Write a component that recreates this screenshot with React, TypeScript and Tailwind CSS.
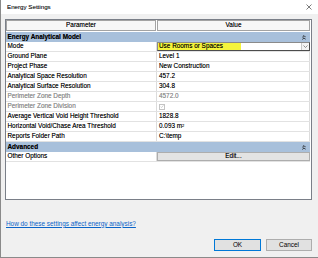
import type { ReactNode } from "react";

interface Row {
  label: string;
  value: ReactNode;
  disabled?: boolean;
}

const rows: Row[] = [
  { label: "Ground Plane", value: "Level 1" },
  { label: "Project Phase", value: "New Construction" },
  { label: "Analytical Space Resolution", value: "457.2" },
  { label: "Analytical Surface Resolution", value: "304.8" },
  { label: "Perimeter Zone Depth", value: "4572.0", disabled: true },
  {
    label: "Perimeter Zone Division",
    disabled: true,
    value: (
      <span className="w-[6px] h-[6px] border border-[#c4c4c4] bg-white flex items-center justify-center">
        <svg width="5" height="5" viewBox="0 0 5 5">
          <path d="M0.8 2.6 L2 3.8 L4.3 1" fill="none" stroke="#b8b8b8" strokeWidth="0.8" />
        </svg>
      </span>
    ),
  },
  { label: "Average Vertical Void Height Threshold", value: "1828.8" },
  {
    label: "Horizontal Void/Chase Area Threshold",
    value: (
      <span>
        0.093 m<sup className="text-[4px] relative -top-[1px]">2</sup>
      </span>
    ),
  },
  { label: "Reports Folder Path", value: "C:\\temp" },
];

const CollapseIcon = () => (
  <svg width="4" height="5" viewBox="0 0 4 5">
    <path d="M0.4 2.2 L2 0.6 L3.6 2.2 M0.4 4.4 L2 2.8 L3.6 4.4" fill="none" stroke="#1a1a1a" strokeWidth="0.9" />
  </svg>
);

const Section = ({ title }: { title: string }) => (
  <div className="h-[10px] bg-[#a8c0db] flex items-center justify-between pl-[1.5px] pr-[4px] font-bold">
    <span>{title}</span>
    <CollapseIcon />
  </div>
);

const DataRow = ({ label, children, disabled }: { label: string; children: ReactNode; disabled?: boolean }) => (
  <div className={`h-[10px] flex border-b border-[#e2e2e2] ${disabled ? "text-[#9c9c9c]" : ""}`}>
    <div className="w-[151px] shrink-0 pl-[1.5px] flex items-center border-r border-[#dcdcdc]">{label}</div>
    <div className="flex-1 pl-[2px] flex items-center border-r border-[#dcdcdc]">{children}</div>
  </div>
);

export default function App() {
  return (
    <div className="w-[318px] h-[258px] bg-[#f0f0f0] border-l border-b border-[#8a8a8a] flex flex-col text-[6.4px] leading-none text-black font-['Liberation_Sans',Arial,sans-serif] [text-shadow:0_0_0.3px_rgba(0,0,0,0.5)] overflow-hidden">
      {/* Title bar */}
      <div className="h-[14px] bg-white flex items-center justify-between pl-[6px] pr-[6px] shrink-0">
        <span className="text-[6.2px] text-[#222]">Energy Settings</span>
        <svg width="6" height="6" viewBox="0 0 6 6">
          <path d="M0.5 0.5 L5.5 5.5 M5.5 0.5 L0.5 5.5" stroke="#444" strokeWidth="0.7" />
        </svg>
      </div>

      {/* Property grid */}
      <div className="mt-[5px] ml-[4px] w-[307px] h-[181px] bg-white border border-[#7a7f88] shrink-0 overflow-hidden">
        <div className="w-[304px]">
          <div className="h-[12px] flex gap-[1px] pb-[1px]">
            <div className="w-[150px] border border-[#a3a3a3] bg-[#f7f7f7] flex items-center justify-center">
              Parameter
            </div>
            <div className="flex-1 border border-[#a3a3a3] bg-[#f7f7f7] flex items-center justify-center">
              Value
            </div>
          </div>

          <Section title="Energy Analytical Model" />

          <div className="h-[10px] flex border-b border-[#e2e2e2]">
            <div className="w-[151px] shrink-0 pl-[1.5px] flex items-center border-r border-[#dcdcdc]">Mode</div>
            <div className="flex-1 flex items-stretch border border-[#4c4c4c] border-t-[#8a8a8a] border-l-[#8a8a8a]">
              <span className="w-[83px] bg-[#f4f43c] flex items-center pl-[1px]">Use Rooms or Spaces</span>
              <span className="flex-1" />
              <span className="w-[8px] border-l border-[#c8c8c8] bg-[#f4f4f4] flex items-center justify-center">
                <svg width="5" height="3" viewBox="0 0 5 3">
                  <path d="M0.5 0.5 L2.5 2.5 L4.5 0.5" fill="none" stroke="#777" strokeWidth="0.8" />
                </svg>
              </span>
            </div>
          </div>

          {rows.map((r) => (
            <DataRow key={r.label} label={r.label} disabled={r.disabled}>
              {r.value}
            </DataRow>
          ))}

          <Section title="Advanced" />

          <div className="h-[10px] flex border-b border-[#e2e2e2]">
            <div className="w-[151px] shrink-0 pl-[1.5px] flex items-center border-r border-[#dcdcdc]">Other Options</div>
            <div className="flex-1 border border-[#adadad] bg-[#e3e3e3] flex items-center justify-center">Edit...</div>
          </div>
        </div>
      </div>

      {/* Help link */}
      <div className="mt-[20px] ml-[5px] h-[8px] flex items-center">
        <span className="text-[#0a64c8] underline [text-shadow:none]">How do these settings affect energy analysis?</span>
      </div>

      {/* Buttons */}
      <div className="mt-[11px] flex justify-end gap-[5px] pr-[6px]">
        <button className="w-[47px] h-[12px] bg-[#e1e1e1] border border-[#0078d7] flex items-center justify-center">
          OK
        </button>
        <button className="w-[46px] h-[12px] bg-[#e1e1e1] border border-[#adadad] flex items-center justify-center">
          Cancel
        </button>
      </div>
    </div>
  );
}
